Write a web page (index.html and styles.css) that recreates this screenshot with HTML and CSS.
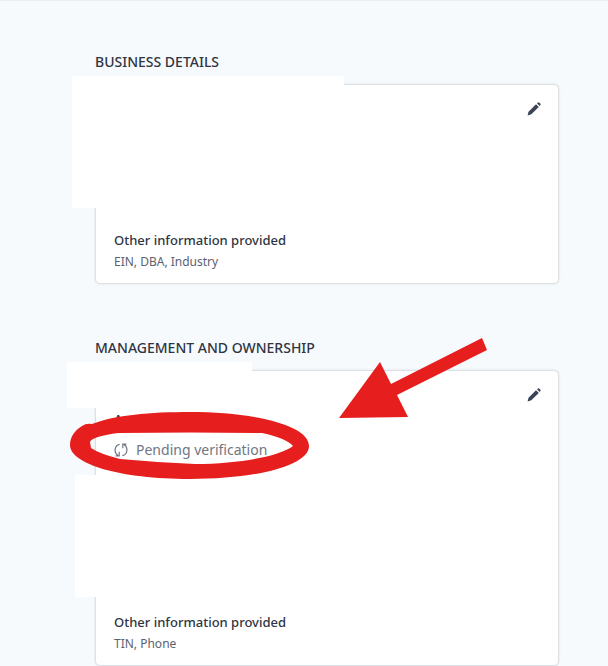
FILE: index.html
```html
<!DOCTYPE html>
<html lang="en">
<head>
<meta charset="UTF-8">
<meta name="viewport" content="width=device-width, initial-scale=1.0">
<title>Business settings</title>
<link rel="stylesheet" href="styles.css">
</head>
<body>
<main class="page">
  <section class="section">
    <h2 class="section-title">BUSINESS DETAILS</h2>
    <div class="card business">
      <div class="mask mask-business"></div>
      <button class="edit" type="button" aria-label="Edit business details">
        <svg viewBox="0 0 14 14" width="14" height="14">
          <path d="M9 2.2 11.8 5 4.3 12.3 0.6 13.4 1.5 9.7Z M10 1.3 11 .4Q11.7 0 12.4.7L13.3 1.6Q14 2.3 13.4 3L12.6 4Z"/>
        </svg>
      </button>
      <div class="other">
        <h3 class="label">Other information provided</h3>
        <p class="value">EIN, DBA, Industry</p>
      </div>
    </div>
  </section>

  <section class="section">
    <h2 class="section-title">MANAGEMENT AND OWNERSHIP</h2>
    <div class="card management">
      <div class="mask mask-name"></div>
      <div class="mask mask-person"></div>
      <button class="edit" type="button" aria-label="Edit management and ownership">
        <svg viewBox="0 0 14 14" width="14" height="14">
          <path d="M9 2.2 11.8 5 4.3 12.3 0.6 13.4 1.5 9.7Z M10 1.3 11 .4Q11.7 0 12.4.7L13.3 1.6Q14 2.3 13.4 3L12.6 4Z"/>
        </svg>
      </button>
      <div class="person">
        <p class="label">A</p>
        <p class="status">
          <svg class="sync" viewBox="0 0 14 14" width="14" height="14">
            <path d="M5.6 1.4C.2 2.600-.4 9.600 4 12.400M1.600 12.900H5.200V8.800M8.400 12.600C13.800 11.400 14.400 4.400 10 1.600M12.400 1.100H8.800V5.200"/>
          </svg>
          Pending verification
        </p>
      </div>
      <div class="other">
        <h3 class="label">Other information provided</h3>
        <p class="value">TIN, Phone</p>
      </div>
      <!-- hand-drawn circle and arrow -->
      <svg class="markup" viewBox="66 330 426 155" width="426" height="155">
        <path fill-rule="evenodd" d="M70 445C70 437 75 430 82 426Q86 423 92 424C115 415 150 412 190 412C250 412 309 424 309 446C309 466 255 479 190 479C120 479 70 464 70 445ZM90 442C91 438 103 435 118 433Q190 432 262 433Q286 438 293 446C280 456 240 464 195 464C170 463 145 461 120 459Q100 454 91 448Z"/>
        <path d="M339 418 380 362 391 384 482 338 487 350 477 355 473 357 397 395 408 417Z"/>
      </svg>
    </div>
  </section>
</main>
</body>
</html>
```

FILE: styles.css
```css
* {
  box-sizing: border-box;
}
body {
  margin: 0;
  background-color: #f6fafd;
  border-top: 1px solid #e9eef2;
  font-family: "Noto Sans", "Open Sans", sans-serif;
  font-size: 12px;
  line-height: 22px;
  color: #2f3542;
}
h2, h3, p {
  margin: 0;
}
.page {
  padding: 51px 49px 0 95px;
}
.section + .section {
  margin-top: 54px;
}
.section-title {
  margin-bottom: 12px;
  font-size: 14px;
  line-height: 20px;
  font-weight: 500;
}
.card {
  position: relative;
  display: flex;
  flex-direction: column;
  padding: 10px 18px;
  background-color: #fff;
  border: 1px solid #dde1e5;
  border-radius: 5px;
  box-shadow: 0 0 2px rgba(50, 60, 70, 0.15);
}
.business {
  min-height: 200px;
}
.management {
  min-height: 296px;
}
.edit {
  position: absolute;
  top: 10px;
  right: 10px;
  display: flex;
  padding: 7px;
  border: 0;
  background: none;
  cursor: pointer;
}
.edit svg {
  fill: #3c4257;
}
.label {
  font-size: 13px;
  font-weight: 500;
}
.value {
  color: #5c6270;
}
.person {
  margin-top: 27px;
}
.status {
  display: flex;
  align-items: center;
  gap: 8px;
  margin-top: 9px;
  font-size: 14px;
  color: #6f7782;
}
.sync {
  fill: none;
  stroke: #6f7782;
  stroke-width: 1.2;
}
.other {
  margin-top: auto;
}
.mask {
  position: absolute;
  background-color: #fff;
}
.mask-business {
  top: -9px;
  left: -24px;
  width: 272px;
  height: 132px;
}
.mask-name {
  top: -9px;
  left: -29px;
  width: 185px;
  height: 46px;
}
.mask-person {
  top: 104px;
  left: -21px;
  width: 185px;
  height: 122px;
}
.markup {
  position: absolute;
  top: -41px;
  left: -30px;
  fill: #e61e1e;
  pointer-events: none;
}
```
